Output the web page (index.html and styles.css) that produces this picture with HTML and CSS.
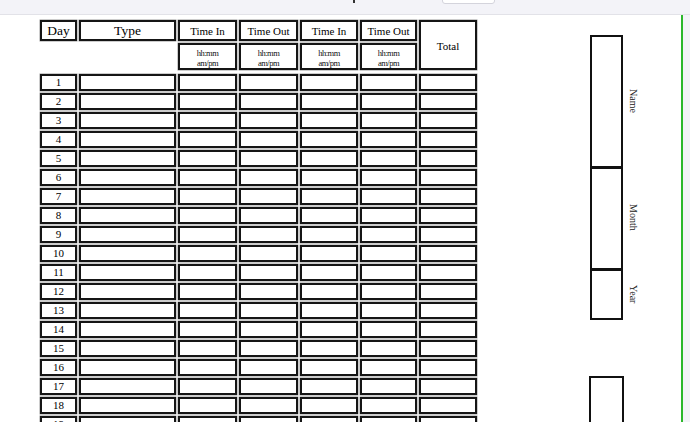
FILE: index.html
```html
<!DOCTYPE html>
<html lang="en">
<head>
<meta charset="utf-8">
<title>Time Sheet</title>
<link rel="stylesheet" href="styles.css">
</head>
<body>
<div class="topbar">
  <span class="mark"></span>
  <span class="tab"></span>
</div>
<div class="viewer">
  <div class="page">
    <section class="sheet">
      <div class="head">
        <div class="c h1 day">Day</div>
        <div class="c h1 type">Type</div>
        <div class="c h1">Time In</div>
        <div class="c h1">Time Out</div>
        <div class="c h1">Time In</div>
        <div class="c h1">Time Out</div>
        <div class="c h1 total">Total</div>
        <div class="blank"></div>
        <div class="c fmt">hh:mm<br>am/pm</div>
        <div class="c fmt">hh:mm<br>am/pm</div>
        <div class="c fmt">hh:mm<br>am/pm</div>
        <div class="c fmt">hh:mm<br>am/pm</div>
      </div>
      <div class="body">
        <div class="c n">1</div><div class="c"></div><div class="c"></div><div class="c"></div><div class="c"></div><div class="c"></div><div class="c"></div>
        <div class="c n">2</div><div class="c"></div><div class="c"></div><div class="c"></div><div class="c"></div><div class="c"></div><div class="c"></div>
        <div class="c n">3</div><div class="c"></div><div class="c"></div><div class="c"></div><div class="c"></div><div class="c"></div><div class="c"></div>
        <div class="c n">4</div><div class="c"></div><div class="c"></div><div class="c"></div><div class="c"></div><div class="c"></div><div class="c"></div>
        <div class="c n">5</div><div class="c"></div><div class="c"></div><div class="c"></div><div class="c"></div><div class="c"></div><div class="c"></div>
        <div class="c n">6</div><div class="c"></div><div class="c"></div><div class="c"></div><div class="c"></div><div class="c"></div><div class="c"></div>
        <div class="c n">7</div><div class="c"></div><div class="c"></div><div class="c"></div><div class="c"></div><div class="c"></div><div class="c"></div>
        <div class="c n">8</div><div class="c"></div><div class="c"></div><div class="c"></div><div class="c"></div><div class="c"></div><div class="c"></div>
        <div class="c n">9</div><div class="c"></div><div class="c"></div><div class="c"></div><div class="c"></div><div class="c"></div><div class="c"></div>
        <div class="c n">10</div><div class="c"></div><div class="c"></div><div class="c"></div><div class="c"></div><div class="c"></div><div class="c"></div>
        <div class="c n">11</div><div class="c"></div><div class="c"></div><div class="c"></div><div class="c"></div><div class="c"></div><div class="c"></div>
        <div class="c n">12</div><div class="c"></div><div class="c"></div><div class="c"></div><div class="c"></div><div class="c"></div><div class="c"></div>
        <div class="c n">13</div><div class="c"></div><div class="c"></div><div class="c"></div><div class="c"></div><div class="c"></div><div class="c"></div>
        <div class="c n">14</div><div class="c"></div><div class="c"></div><div class="c"></div><div class="c"></div><div class="c"></div><div class="c"></div>
        <div class="c n">15</div><div class="c"></div><div class="c"></div><div class="c"></div><div class="c"></div><div class="c"></div><div class="c"></div>
        <div class="c n">16</div><div class="c"></div><div class="c"></div><div class="c"></div><div class="c"></div><div class="c"></div><div class="c"></div>
        <div class="c n">17</div><div class="c"></div><div class="c"></div><div class="c"></div><div class="c"></div><div class="c"></div><div class="c"></div>
        <div class="c n">18</div><div class="c"></div><div class="c"></div><div class="c"></div><div class="c"></div><div class="c"></div><div class="c"></div>
        <div class="c n">19</div><div class="c"></div><div class="c"></div><div class="c"></div><div class="c"></div><div class="c"></div><div class="c"></div>
        <div class="c n">20</div><div class="c"></div><div class="c"></div><div class="c"></div><div class="c"></div><div class="c"></div><div class="c"></div>
      </div>
    </section>
    <aside class="side">
      <div class="meta">
        <div class="seg seg-name"><div class="box"></div><span class="lbl">Name</span></div>
        <div class="seg seg-month"><div class="box"></div><span class="lbl">Month</span></div>
        <div class="seg seg-year"><div class="box"></div><span class="lbl">Year</span></div>
      </div>
      <div class="box2"></div>
    </aside>
  </div>
  <div class="filler"></div>
</div>
</body>
</html>
```

FILE: styles.css
```css
* { box-sizing: border-box; }
html, body {
  margin: 0;
  height: 422px;
  overflow: hidden;
  background: #ffffff;
  font-family: "Liberation Serif", "Times New Roman", serif;
  color: #000;
}
.topbar {
  height: 15px;
  background: #f3f3f8;
  border-bottom: 1px solid #e2e2e8;
  display: flex;
  align-items: flex-start;
}
.mark {
  width: 2px;
  height: 3px;
  margin-left: 353px;
  background: #333;
}
.tab {
  width: 53px;
  height: 5px;
  margin-left: 87px;
  margin-top: -1px;
  background: #fff;
  border: 1px solid #d4d4dc;
  border-radius: 0 0 3px 3px;
}
.viewer {
  display: flex;
  height: 407px;
}
.page {
  width: 683px;
  border-right: 2px solid #2db82d;
  background: #fff;
  display: flex;
  align-items: flex-start;
}
.filler {
  flex: 1;
  background: #f3f3f8;
}
.sheet {
  margin-left: 40px;
  margin-top: 5px;
}
.head, .body {
  display: grid;
  grid-template-columns: 37px 97px 59px 59px 58px 57px 58px;
  column-gap: 2px;
  row-gap: 2px;
}
.head {
  grid-template-rows: 21px 27px;
}
.body {
  margin-top: 4px;
  grid-auto-rows: 17px;
}
.c {
  border: 2px solid #151515;
  box-shadow: 0 0 0 0.5px #9a9a9a;
  background: #fff;
  display: flex;
  align-items: center;
  justify-content: center;
  text-align: center;
}
.h1 {
  font-size: 11px;
  padding-top: 1px;
}
.day, .type {
  font-size: 13.5px;
}
.total {
  grid-column: 7;
  grid-row: 1 / span 2;
}
.blank {
  grid-column: 1 / span 2;
  grid-row: 2;
}
.fmt {
  font-size: 8.5px;
  line-height: 9.5px;
  padding-top: 4px;
  letter-spacing: -0.5px;
  color: #111;
}
.n {
  font-size: 11px;
  line-height: 13px;
}
.side {
  margin-left: 113px;
  margin-top: 20px;
  display: flex;
  flex-direction: column;
}
.seg {
  display: flex;
  align-items: stretch;
}
.seg .box {
  width: 33px;
  border: 2px solid #111;
  border-bottom: none;
}
.seg-name { height: 131px; }
.seg-month { height: 102px; }
.seg-year { height: 52px; }
.seg-month .box, .seg-year .box {
  border-top-width: 3px;
}
.seg-year .box {
  border-bottom: 2px solid #111;
}
.lbl {
  writing-mode: vertical-rl;
  font-size: 10px;
  color: #222;
  align-self: center;
  margin-left: 5px;
}
.box2 {
  width: 35px;
  height: 60px;
  margin-left: -1px;
  margin-top: 56px;
  border: 2px solid #111;
}
```
